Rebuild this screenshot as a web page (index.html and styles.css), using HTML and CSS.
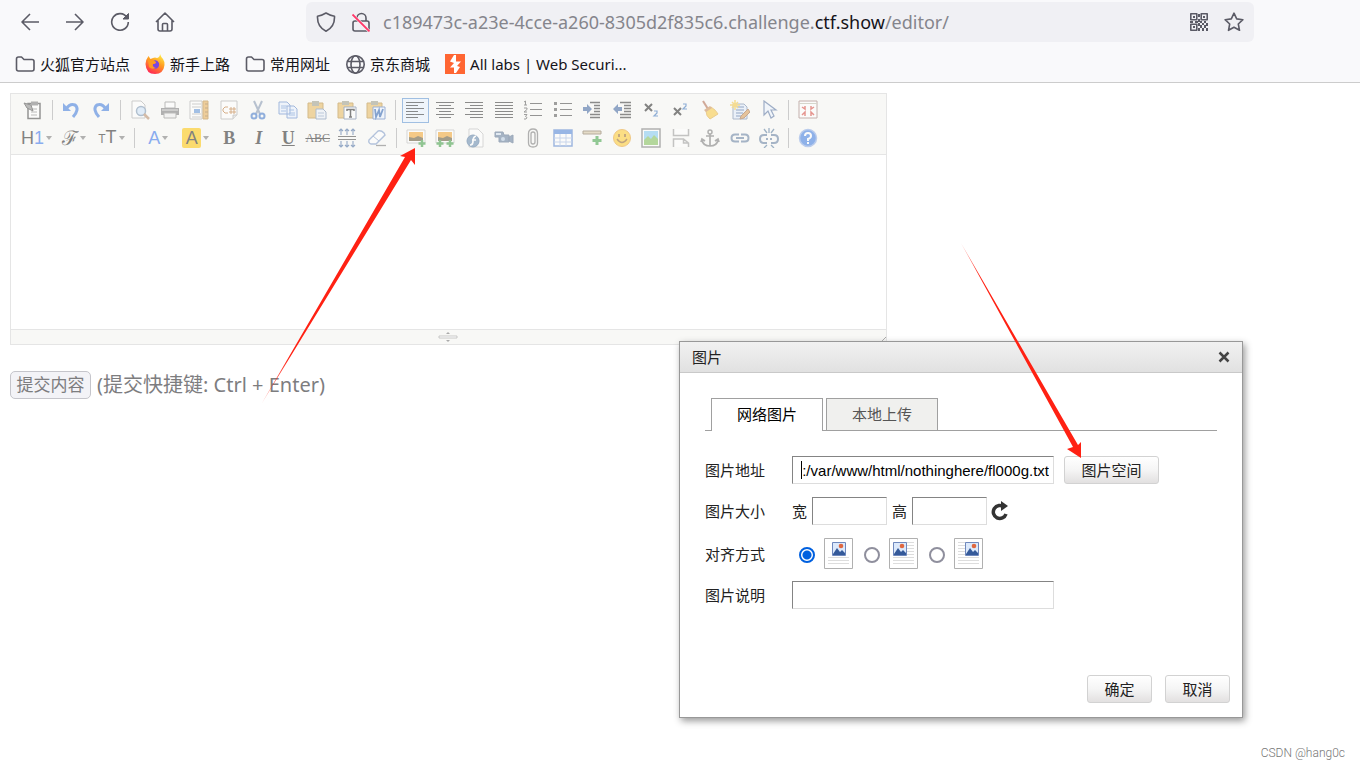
FILE: index.html
```html
<!DOCTYPE html>
<html lang="zh-CN">
<head>
<meta charset="utf-8">
<title>editor</title>
<link rel="stylesheet" href="styles.css">
</head>
<body>
<header class="browser">
  <div class="nav">
    <div class="nav-buttons">
      <button class="nav-btn" aria-label="Back"><svg viewBox="0 0 20 20"><path d="M19 10H2M10 2 2 10l8 8"/></svg></button>
      <button class="nav-btn" aria-label="Forward"><svg viewBox="0 0 20 20"><path d="M1 10h17M10 2l8 8-8 8"/></svg></button>
      <button class="nav-btn" aria-label="Reload"><svg viewBox="0 0 20 20"><path d="M17 5.500A8.300 8.300 0 1 0 18.300 10"/><path d="M18.500 1.500V7H13z" fill="#5b5b66" stroke-width="1"/></svg></button>
      <button class="nav-btn" aria-label="Home"><svg viewBox="0 0 20 20"><path d="M1 10 10 1l9 9M3 8.500V17q0 2 2 2h10q2 0 2-2V8.500M7.500 19v-6.500q0-1 1-1h3q1 0 1 1V19"/></svg></button>
    </div>
    <div class="url-bar">
      <svg class="ui" viewBox="0 0 20 20"><path d="M10 1Q14 3.500 18.500 4.200 19 15 10 19.200 1 15 1.500 4.200 6 3.500 10 1z"/></svg>
      <svg class="ui lock" viewBox="0 0 20 20"><path d="M6 9V6a4.500 4.500 0 0 1 9 0v3M4 9h12q2 0 2 2v6q0 2-2 2H4q-2 0-2-2v-6q0-2 2-2z"/><path d="M1.500 2.500l17 17" stroke="#f9f9fb" stroke-width="3"/><path d="M1.500 2.500l17 17" stroke="#ff3b6b" stroke-width="1.800"/></svg>
      <div class="url">c189473c-a23e-4cce-a260-8305d2f835c6.challenge.<b>ctf.show</b>/editor/</div>
      <svg class="ui" viewBox="0 0 20 20"><path d="M1.800 1.800h6v6h-6zM12.200 1.800h6v6h-6zM1.800 12.200h6v6h-6z" stroke-width="1.600"/><path fill="#5b5b66" stroke="none" d="M4 4h2v2H4zM14 4h2v2h-2zM4 14h2v2H4zM9 2h2v3H9zM9 7h2v3H9zM1 9h3v2H1zM6 9h3v2H6zM11 9h2v2h-2zM15 9h2v2h-2zM9 11h2v3H9zM13 11h2v2h-2zM17 11h2v3h-2zM11 13h2v3h-2zM15 13h2v3h-2zM9 16h2v3H9zM13 16h2v3h-2zM17 16h2v3h-2z"/></svg>
      <svg class="ui" viewBox="0 0 20 20"><path d="M10 1.200l2.700 5.700 6.200.8-4.600 4.300 1.200 6.300L10 15.300l-5.500 3 1.200-6.300L1.100 7.700l6.200-.8z" stroke-linejoin="round"/></svg>
    </div>
  </div>
  <nav class="bookmarks">
    <a href="#"><svg class="ui" viewBox="0 0 20 20"><path d="M1.500 15V5q0-2 2-2h3l2.500 2.500h8q2 0 2 2V15q0 2-2 2h-13.500q-2 0-2-2z"/></svg>火狐官方站点</a>
    <a href="#"><svg viewBox="0 0 20 20"><defs><linearGradient id="fx" x1=".8" y1="0" x2=".3" y2="1"><stop offset="0" stop-color="#fff04a"/><stop offset=".45" stop-color="#ff9b20"/><stop offset="1" stop-color="#ff2456"/></linearGradient></defs><path fill="url(#fx)" d="M.500 10Q1 5 3.500 2l2 3 2.500-1q2-1 4 0 3-1 3-4 1 3 3 5 2 3 1.500 6Q18.500 20 10 20 1 20 .500 10z"/><path fill="#7a45e0" d="M8 7q4-2 6 2 1 5-4 6-4-1-4-4z"/><path fill="#ff9a22" d="M3 6q3-2 5 0l3 2q0 2-3 2-1 3 3 4-4 2-7-1z"/></svg>新手上路</a>
    <a href="#"><svg class="ui" viewBox="0 0 20 20"><path d="M1.500 15V5q0-2 2-2h3l2.500 2.500h8q2 0 2 2V15q0 2-2 2h-13.500q-2 0-2-2z"/></svg>常用网址</a>
    <a href="#"><svg class="ui" viewBox="0 0 20 20"><circle cx="10.500" cy="10.500" r="8.700"/><ellipse cx="10.500" cy="10.500" rx="4.500" ry="8.700"/><path d="M2.500 7.500h16M2.500 13.500h16"/></svg>京东商城</a>
    <a href="#"><svg viewBox="0 0 20 20"><path fill="#ff6633" d="M0 0h20v20H0z"/><path fill="#fff" d="M9 1h2v6.500h5L12 12l3 1-4 6H9v-5.500H5L9 9 5 7.500z"/></svg>All labs | Web Securi...</a>
  </nav>
</header>

<main class="page">
  <section class="editor">
    <div class="toolbar">
      <div class="tool-row">
        <button class="tool" aria-label="Source"><svg viewBox="0 0 20 20"><path d="M5 3.500h12v15H5z" fill="#fff" stroke="#444" stroke-width="1.500"/><path d="M8 1.500h7v4H8z" fill="#777"/><path d="M8 9h6M8 12h6M8 15h6" stroke="#888"/><path d="M1 3l7 2 2 6-6-3z" fill="#888" stroke="#444"/></svg></button>
        <i class="sep"></i>
        <button class="tool" aria-label="Undo"><svg viewBox="0 0 20 20"><path d="M4 9q4-6 9-4 5 4-2 12" fill="none" stroke="#3b78dc" stroke-width="3"/><path d="M1 3v8h8z" fill="#3b78dc"/></svg></button>
        <button class="tool" aria-label="Redo"><svg viewBox="0 0 20 20"><path d="M15 9Q11 3 6 5q-5 4 2 12" fill="none" stroke="#3b78dc" stroke-width="3"/><path d="M18 3v8h-8z" fill="#3b78dc"/></svg></button>
        <i class="sep"></i>
        <button class="tool" aria-label="Preview"><svg viewBox="0 0 20 20"><path d="M2 1h9l4 4v13H2z" fill="#fff" stroke="#aaa"/><circle cx="11" cy="11" r="4.500" fill="#cee3fa" stroke="#7893b0" stroke-width="1.500"/><path d="M14 14l5 5" stroke="#b78b67" stroke-width="2.500"/></svg></button>
        <button class="tool" aria-label="Print"><svg viewBox="0 0 20 20"><path d="M5 2h10v6H5z" fill="#fff" stroke="#888"/><path d="M1 8h18v7H1z" fill="#777"/><path d="M2 10h16" stroke="#ddd"/><path d="M4 13h12v5H4z" fill="#eee" stroke="#888"/></svg></button>
        <button class="tool" aria-label="Template"><svg viewBox="0 0 20 20"><path d="M1 1h12v18H1z" fill="#fff" stroke="#aaa"/><path d="M3 4h9M3 7h9M3 14h9M3 17h9" stroke="#aaa"/><path d="M5 9h6v4H5z" fill="#5d91d6"/><path d="M14 1h5v18h-5z" fill="#e7aa50" stroke="#b98538"/><path d="M16 4h3M16 8h3M16 12h3M16 16h3" stroke="#9b7238"/></svg></button>
        <button class="tool" aria-label="Code"><svg viewBox="0 0 20 20"><path d="M2 1h16v14l-4 4H2z" fill="#fff" stroke="#aaa"/><path d="M9 7H6L4 9v2l2 2h3M12 7v7M15 7v7M10 9h7M10 12h7" fill="none" stroke="#bb7430"/><path d="M14 19v-4h4" fill="#ddd" stroke="#aaa"/></svg></button>
        <button class="tool" aria-label="Cut"><svg viewBox="0 0 20 20"><path d="M6 1l6 13M14 1L8 14" stroke="#8295b0" stroke-width="2"/><circle cx="6" cy="16" r="2.500" fill="none" stroke="#3d75c8" stroke-width="2"/><circle cx="14" cy="16" r="2.500" fill="none" stroke="#3d75c8" stroke-width="2"/></svg></button>
        <button class="tool" aria-label="Copy"><svg viewBox="0 0 20 20"><path d="M1 2h8l3 3v9H1zM9 6h7l3 3v9H9z" fill="#e7f0ff" stroke="#5c85c8"/><path d="M3 6h6M3 8h5M3 11h5M11 10h5M11 13h6M11 15h6" stroke="#6f99d7"/></svg></button>
        <button class="tool" aria-label="Paste"><svg viewBox="0 0 20 20"><path d="M1 3h15v15H1z" fill="#e6b75b" stroke="#b78933"/><path d="M5 1h7v5H5z" fill="#9b9b86"/><path d="M9 9h7l3 3v7H9z" fill="#eaf0f7" stroke="#738bad"/><path d="M11 13h6M11 16h6" stroke="#8ca4c5"/></svg></button>
        <button class="tool" aria-label="Paste text"><svg viewBox="0 0 20 20"><path d="M1 3h15v15H1z" fill="#e6b75b" stroke="#b78933"/><path d="M5 1h7v4H5z" fill="#9b9b86"/><path d="M7 7h12v12H7z" fill="#fff" stroke="#65799a"/><path d="M10 11V9.500h7V11M13.500 9.500V17M12 17h3" fill="none" stroke="#222" stroke-width="1.500"/></svg></button>
        <button class="tool" aria-label="Paste Word"><svg viewBox="0 0 20 20"><path d="M1 3h15v15H1z" fill="#e6b75b" stroke="#b78933"/><path d="M5 1h7v4H5z" fill="#9b9b86"/><path d="M7 7h12v12H7z" fill="#eaf2ff" stroke="#5279bb"/><path d="M9 9l1 8 3-7 1 7 3-8" fill="none" stroke="#285fb1" stroke-width="1.800"/></svg></button>
        <i class="sep"></i>
        <button class="tool selected" aria-label="Align left"><svg viewBox="0 0 20 20"><path d="M1 2.500h18M1 5.500h12M1 8.500h18M1 11.500h12M1 14.500h18M1 17.500h12" stroke="#333"/></svg></button>
        <button class="tool" aria-label="Align center"><svg viewBox="0 0 20 20"><path d="M1 2.500h18M4 5.500h12M1 8.500h18M4 11.500h12M1 14.500h18M4 17.500h12" stroke="#333"/></svg></button>
        <button class="tool" aria-label="Align right"><svg viewBox="0 0 20 20"><path d="M1 2.500h18M6 5.500h13M1 8.500h18M6 11.500h13M1 14.500h18M6 17.500h13" stroke="#333"/></svg></button>
        <button class="tool" aria-label="Justify"><svg viewBox="0 0 20 20"><path d="M1 2.500h18M1 5.500h18M1 8.500h18M1 11.500h18M1 14.500h18M1 17.500h18" stroke="#333"/></svg></button>
        <button class="tool" aria-label="Numbered list"><svg viewBox="0 0 20 20"><path d="M7 3.500h12M7 9.500h12M7 15.500h12" stroke="#444"/><path d="M1 2l1.500-1v4M1 5h3M1 8h3v1.500L1 12h3M1 14.500h3l-1.500 2 1.500 1-1 1.500H1" fill="none" stroke="#555"/></svg></button>
        <button class="tool" aria-label="Bulleted list"><svg viewBox="0 0 20 20"><path d="M7 3.500h12M7 9.500h12M7 15.500h12" stroke="#444"/><path d="M1 2h3v3H1zM1 8h3v3H1zM1 14h3v3H1z" fill="#555"/></svg></button>
        <button class="tool" aria-label="Indent"><svg viewBox="0 0 20 20"><path d="M8 2.500h10M12 5.500h6M12 8.500h6M12 11.500h6M8 14.500h10M8 17.500h10" stroke="#333" stroke-width="1.400"/><path d="M1 7h4V4l5 5-5 5v-3H1z" fill="#3d649f"/></svg></button>
        <button class="tool" aria-label="Outdent"><svg viewBox="0 0 20 20"><path d="M8 2.500h11M12 5.500h7M12 8.500h7M12 11.500h7M8 14.500h11M8 17.500h11" stroke="#333" stroke-width="1.400"/><path d="M10 7H6V4L1 9l5 5v-3h4z" fill="#3d649f"/></svg></button>
        <button class="tool" aria-label="Subscript"><svg viewBox="0 0 20 20"><path d="M4 4l7 7M11 4l-7 7" stroke="#222" stroke-width="2"/><path d="M13 11h3v2l-3 3h4" fill="none" stroke="#3972bb" stroke-width="1.200"/></svg></button>
        <button class="tool" aria-label="Superscript"><svg viewBox="0 0 20 20"><path d="M3 8l7 7M10 8l-7 7" stroke="#222" stroke-width="2"/><path d="M12 4h3v2l-3 3h4" fill="none" stroke="#3972bb" stroke-width="1.200"/></svg></button>
        <button class="tool" aria-label="Clean"><svg viewBox="0 0 20 20"><path d="M3 1l5 8" stroke="#b16a4c" stroke-width="2"/><path d="M6 11l5-4q5 3 7 7l-8 5q-4-3-4-8z" fill="#f8c83c" stroke="#e0aa3a"/><path d="M4 10l6-4 2 2-6 4z" fill="#c98a50"/></svg></button>
        <button class="tool" aria-label="Quick format"><svg viewBox="0 0 20 20"><path d="M3 4h11l3 3v12H3z" fill="#dfeafb" stroke="#7186a8"/><path d="M7 7h7M6 10h8M6 13h7M6 16h5" stroke="#40649c"/><path d="M5 0v10M0 5h10M2 2l6 6M8 2L2 8" stroke="#f4c63d" stroke-width="1.500"/><path d="M11 16l7-7 2 3-6 6-4 1z" fill="#d79852" stroke="#9e683e"/></svg></button>
        <button class="tool" aria-label="Select all"><svg viewBox="0 0 20 20"><path d="M5 1v14l4-4 3 7 3-2-3-6h5z" fill="#edf4ff" stroke="#55719f" stroke-width="1.200"/></svg></button>
        <i class="sep"></i>
        <button class="tool" aria-label="Fullscreen"><svg viewBox="0 0 20 20"><path d="M1 1h18v17H1z" fill="#fff" stroke="#9a7773"/><path d="M1 3.500h18" stroke="#bba"/><path d="M4 7l3 2V6M16 7l-3 2V6M4 15l3-3v4M16 15l-3-3v4" fill="none" stroke="#d7453c" stroke-width="1.500"/></svg></button>
      </div>
      <div class="tool-row">
        <button class="tool wide" aria-label="Heading"><span>H<em>1</em></span><i class="drop"></i></button>
        <button class="tool wide" aria-label="Font"><span class="script">ℱ</span><i class="drop"></i></button>
        <button class="tool wide" aria-label="Size"><span><small>T</small>T</span><i class="drop"></i></button>
        <i class="sep"></i>
        <button class="tool wide" aria-label="Text color"><span><em>A</em></span><i class="drop"></i></button>
        <button class="tool wide" aria-label="Highlight"><span class="mark">A</span><i class="drop"></i></button>
        <button class="tool serif" aria-label="Bold"><b>B</b></button>
        <button class="tool serif italic" aria-label="Italic"><b>I</b></button>
        <button class="tool serif under" aria-label="Underline"><b>U</b></button>
        <button class="tool serif strike" aria-label="Strikethrough"><span>ABC</span></button>
        <button class="tool" aria-label="Line height"><svg viewBox="0 0 20 20"><path d="M1 8.500h18M1 11.500h18" stroke="#444"/><path d="M4 7V1M10 7V1M16 7V1M4 13v6M10 13v6M16 13v6M2 3l2-2 2 2M8 3l2-2 2 2M14 3l2-2 2 2M2 17l2 2 2-2M8 17l2 2 2-2M14 17l2 2 2-2" fill="none" stroke="#456aa0" stroke-width="1.100"/></svg></button>
        <button class="tool" aria-label="Remove format"><svg viewBox="0 0 20 20"><path d="M2 12l9-9q3-1 6 2l1 2-9 9H4q-3-1-2-4z" fill="#fff" stroke="#7c98c7" stroke-width="1.400"/><path d="M6 8l6 5" stroke="#7c98c7"/><path d="M9 17.500h10" stroke="#777" stroke-width="1.300"/></svg></button>
        <i class="sep"></i>
        <button class="tool" aria-label="Image"><svg viewBox="0 0 20 20"><path d="M1 2h18v13H1z" fill="#fff" stroke="#bbb"/><path d="M3 4h14v9H3z" fill="#f2a32d"/><path d="M3 9l5 1 4-2 5 2v3H3z" fill="#5f5131"/><path d="M16 12v7M12.500 15.500h7" stroke="#3c9c42" stroke-width="2.500"/></svg></button>
        <button class="tool" aria-label="Multi image"><svg viewBox="0 0 20 20"><path d="M1 2h18v13H1z" fill="#fff" stroke="#bbb"/><path d="M3 4h14v9H3z" fill="#f2a32d"/><path d="M3 9l5 1 4-2 5 2v3H3z" fill="#5f5131"/><path d="M5 12v7M1.500 15.500h7M15 12v7M11.500 15.500h7" stroke="#3c9c42" stroke-width="2.500"/></svg></button>
        <button class="tool" aria-label="Flash"><svg viewBox="0 0 20 20"><path d="M4 1h9l5 5v13H4z" fill="#fff" stroke="#bbb"/><circle cx="8" cy="13" r="6" fill="#6286ad" stroke="#496f99"/><path d="M11 8Q8 9 8 13t-3 4M7 12h4" fill="none" stroke="#fff" stroke-width="1.700"/></svg></button>
        <button class="tool" aria-label="Media"><svg viewBox="0 0 20 20"><path d="M1 4h8l1 3h5v7H5V9H1zM15 9l4-2v8l-4-2z" fill="#627c9c" stroke="#536b89"/><path d="M2 5h5v2H2z" fill="#cfdeed"/><circle cx="9" cy="11" r="2" fill="#b4c9e1"/></svg></button>
        <button class="tool" aria-label="Attachment"><svg viewBox="0 0 20 20"><path d="M5.500 13V5.500q0-4.500 4.500-4.500t4.500 4.500V15q0 4-4.500 4t-4.500-4V8M8 14V6q0-2 2-2t2 2v8q0 2-2 2t-2-2" fill="none" stroke="#777" stroke-width="1.300"/></svg></button>
        <button class="tool" aria-label="Table"><svg viewBox="0 0 20 20"><path d="M1 2h18v16H1z" fill="#fff" stroke="#5783ce" stroke-width="1.500"/><path d="M1 2h18v4H1z" fill="#4a81d8"/><path d="M1 10h18M1 14h18M7 6v12M13 6v12" stroke="#a2b9e2"/></svg></button>
        <button class="tool" aria-label="Line"><svg viewBox="0 0 20 20"><path d="M1 3h18v3H1z" fill="#d6c6a3" stroke="#806f55"/><path d="M15 8v9M10.500 12.500h9" stroke="#3da145" stroke-width="3"/></svg></button>
        <button class="tool" aria-label="Emoticon"><svg viewBox="0 0 20 20"><circle cx="10" cy="10" r="8.500" fill="#ffc928" stroke="#e8a12c"/><path d="M5 11q5 7 10 0" fill="none" stroke="#905e20" stroke-width="1.300"/><path d="M7 6v3M13 6v3" stroke="#905e20" stroke-width="1.800"/></svg></button>
        <button class="tool" aria-label="Map"><svg viewBox="0 0 20 20"><path d="M1 1h18v18H1z" fill="#fff" stroke="#777" stroke-width="1.500"/><path d="M3 3h14v14H3z" fill="#80c8f1"/><path d="M3 12l4-4 3 3 3-4 4 4v6H3z" fill="#7dbd54"/></svg></button>
        <button class="tool" aria-label="Page break"><svg viewBox="0 0 20 20"><path d="M2.500 1v6.500h15V1M2.500 19v-8h10l5 4v4M12.500 11v4h5" fill="#fff" stroke="#999" stroke-width="1.500"/></svg></button>
        <button class="tool" aria-label="Anchor"><svg viewBox="0 0 20 20"><circle cx="10" cy="4" r="2" fill="none" stroke="#777" stroke-width="1.500"/><path d="M10 6v12M6 8h8M2 12q1 6 8 6t8-6M1 14l1-3 3 2M19 14l-1-3-3 2" fill="none" stroke="#777" stroke-width="1.700"/></svg></button>
        <button class="tool" aria-label="Link"><svg viewBox="0 0 20 20"><path d="M9 6.500H5Q1.500 6.500 1.500 10T5 13.500h4M11 6.500h4q3.500 0 3.500 3.500T15 13.500h-4M6 10h8" fill="none" stroke="#637d9f" stroke-width="2"/></svg></button>
        <button class="tool" aria-label="Unlink"><svg viewBox="0 0 20 20"><path d="M8 7H5Q1 7 1 11t4 4h3M12 7h3q4 0 4 4t-4 4h-3M7 11h2M11 11h2" fill="none" stroke="#637d9f" stroke-width="2"/><path d="M5 1l3 4M10 0v5M15 1l-3 4M5 20l3-3M15 20l-3-3" stroke="#56799d" stroke-width="1.300"/></svg></button>
        <i class="sep"></i>
        <button class="tool" aria-label="About"><svg viewBox="0 0 20 20"><circle cx="10" cy="10" r="8.500" fill="#3978df" stroke="#89a9e5" stroke-width="1.500"/><path d="M7 8q0-3 3-3t3 3q0 2-3 3v2M10 14v2" fill="none" stroke="#fff" stroke-width="2"/></svg></button>
      </div>
    </div>
    <div class="edit-area"></div>
    <div class="status">
      <svg class="grip" viewBox="0 0 20 12"><path d="M1 5h18v2H1z" fill="#fff" stroke="#bbb" stroke-width=".800"/><path d="M8 3l2-2 2 2M8 9l2 2 2-2" fill="#aaa"/></svg>
      <svg class="corner" viewBox="0 0 8 8"><path d="M1 8l7-7M5 8l3-3" stroke="#aaa"/></svg>
    </div>
  </section>
  <div class="submit-line"><button class="submit">提交内容</button><span>(提交快捷键: Ctrl + Enter)</span></div>
</main>

<section class="dialog" role="dialog" aria-labelledby="dialog-title">
  <div class="dialog-head"><span id="dialog-title">图片</span><button class="close" aria-label="关闭"><svg viewBox="0 0 12 12"><path d="M1.500 1.500l9 9M10.500 1.500l-9 9" stroke="#444" stroke-width="2.500"/></svg></button></div>
  <div class="dialog-body">
    <div class="tabs"><button class="tab active">网络图片</button><button class="tab">本地上传</button></div>
    <div class="field"><label for="remote">图片地址</label><span class="caret-box"><input class="long address" id="remote" value=":/var/www/html/nothinghere/fl000g.txt"><i class="caret"></i></span><button class="btn space">图片空间</button></div>
    <div class="field"><span class="name">图片大小</span><label class="mini" for="w">宽</label><input class="short" id="w"><label class="mini" for="h">高</label><input class="short" id="h"><button class="refresh" aria-label="重置大小"><svg viewBox="0 0 20 20"><path d="M14 6a6.500 6.500 0 1 0 2 7" fill="none" stroke="#333" stroke-width="3.500"/><path d="M11 0l7 5-7 5z" fill="#333"/></svg></button></div>
    <div class="field align"><span class="name">对齐方式</span>
      <input type="radio" name="align" id="al1" checked><label for="al1" aria-label="默认"><svg viewBox="0 0 29 31"><path d="M.500 .500h28v30H.500z" fill="#fff" stroke="#b0b0b0"/><path d="M4 19.500h21M4 22.500h21M4 25.500h21" stroke="#ddd"/><use href="#pic" x="8"/></svg></label>
      <input type="radio" name="align" id="al2"><label for="al2" aria-label="左对齐"><svg viewBox="0 0 29 31"><path d="M.500 .500h28v30H.500z" fill="#fff" stroke="#b0b0b0"/><path d="M4 4.500h21M4 7.500h21M4 10.500h21M4 13.500h21M4 16.500h21M4 19.500h21M4 22.500h21M4 25.500h21" stroke="#ddd"/><use href="#pic" x="4"/></svg></label>
      <input type="radio" name="align" id="al3"><label for="al3" aria-label="右对齐"><svg viewBox="0 0 29 31"><path d="M.500 .500h28v30H.500z" fill="#fff" stroke="#b0b0b0"/><path d="M4 4.500h21M4 7.500h21M4 10.500h21M4 13.500h21M4 16.500h21M4 19.500h21M4 22.500h21M4 25.500h21" stroke="#ddd"/><use href="#pic" x="11"/></svg></label>
    </div>
    <div class="field"><label for="desc">图片说明</label><input class="long" id="desc"></div>
  </div>
  <div class="dialog-foot"><button class="btn">确定</button><button class="btn">取消</button></div>
</section>

<svg class="arrows" viewBox="0 0 1360 769">
  <defs>
    <linearGradient id="a1" gradientUnits="userSpaceOnUse" x1="262" y1="403" x2="290" y2="356"><stop offset="0" stop-color="#ff2113" stop-opacity=".5"/><stop offset="1" stop-color="#ff2113"/></linearGradient>
    <linearGradient id="a2" gradientUnits="userSpaceOnUse" x1="961" y1="243" x2="980" y2="277"><stop offset="0" stop-color="#ff2113" stop-opacity=".5"/><stop offset="1" stop-color="#ff2113"/></linearGradient>
    <g id="pic"><path d="M.500 4.500h13v13H.500z" fill="#dce9fb" stroke="#6f88bd"/><path d="M1 16l4-6 3 4 2-2 3 3v2H1z" fill="#355a9a"/><circle cx="9" cy="8" r="2.300" fill="#df6841"/></g>
  </defs>
  <path fill="url(#a1)" d="M262 403l143-246-5-1 15-8v17l-4-5z"/>
  <path fill="url(#a2)" d="M961 243l117 202 3-3v16l-14-9 6-2z"/>
</svg>
<footer class="credit">CSDN @hang0c</footer>
</body>
</html>
```
FILE: styles.css
```css
* { box-sizing: border-box; }
body {
  margin: 0;
  min-height: 100vh;
  position: relative;
  background: #fff;
  color: #15141a;
  font: 15px/20px "Noto Sans", "Noto Sans CJK SC", sans-serif;
}
button, input { font: inherit; margin: 0; }
button { padding: 0; border: 0; background: none; color: inherit; }
svg { display: block; width: 20px; height: 20px; flex: none; }

.browser { height: 83px; padding-top: 2px; background: #f9f9fb; border-bottom: 1px solid #ccc; }
.nav { display: flex; height: 40px; padding: 0 106px 0 7px; }
.nav-buttons { display: flex; width: 299px; }
.nav-btn { display: grid; place-items: center; width: 45px; }
.nav-btn svg, .ui { fill: none; stroke: #5b5b66; stroke-width: 1.6; stroke-linejoin: round; }
.url-bar { display: flex; flex: 1; align-items: center; gap: 15px; padding: 0 10px; border-radius: 6px; background: #f0f0f4; }
.lock { margin-right: -3px; }
.url { flex: 1; font-size: 18px; color: #85858c; white-space: nowrap; }
.url b { font-weight: 400; color: #15141a; }
.bookmarks { display: flex; gap: 15px; padding: 12px 15px; }
.bookmarks a { display: flex; gap: 5px; color: inherit; text-decoration: none; white-space: nowrap; }

.page { padding: 10px; }
.editor { max-width: 877px; border: 1px solid #e5e5e5; }
.toolbar { height: 61px; padding: 3px 8px; background: #f8f8f6; border-bottom: 1px solid #e5e5e5; }
.tool-row { display: flex; justify-content: space-between; align-items: center; max-width: 803px; height: 26px; margin-bottom: 2px; }
.tool { display: flex; align-items: center; justify-content: center; width: 27px; height: 25px; color: #222; }
.tool > * { opacity: .55; }
.selected { border: 1px solid #a0bfe2; background: #eff5fb; }
.sep { width: 1px; height: 20px; margin: 0 3px; background: #ccc; }
.wide { width: 35px; gap: 2px; font: 18px/20px "Liberation Sans", sans-serif; }
.wide em { font-style: normal; color: #2f6fea; }
.wide small { font-size: 12px; }
.script { font: 20px/20px "DejaVu Serif", serif; }
.mark { width: 19px; border-radius: 2px; background: #ffc400; }
.drop { border: 3px solid transparent; border-top: 4px solid #777; border-bottom: 0; }
.serif { font: 18px/20px "Liberation Serif", serif; }
.italic { font-style: italic; }
.under { text-decoration: underline; }
.strike { font-size: 12px; text-decoration: line-through; }
.edit-area { height: 174px; }
.status { display: flex; align-items: center; height: 15px; padding-left: 427px; background: #f8f8f6; border-top: 1px solid #e5e5e5; }
.grip { height: 12px; }
.corner { width: 8px; height: 8px; margin: 6px 0 0 auto; }
.submit-line { display: flex; align-items: center; gap: 6px; margin-top: 26px; font-size: 20px; line-height: 28px; color: #7d7d7f; }
.submit { width: 81px; height: 28px; border: 1px solid #c5c5cb; border-radius: 5px; background: #f3f3f7; font-size: 17px; line-height: 24px; }

.dialog { position: absolute; left: 679px; top: 341px; width: 564px; border: 1px solid #989898; background: #fff; color: #222; box-shadow: 2px 3px 7px #999; }
.dialog-head { display: flex; align-items: center; justify-content: space-between; height: 31px; padding: 0 12px; border-bottom: 1px solid #c9c9c9; background: linear-gradient(#f1f1f1, #e1e1e1); }
.close svg { width: 12px; height: 12px; }
.dialog-body { padding: 25px; }
.tabs { display: flex; gap: 3px; height: 33px; margin-bottom: 25px; padding-left: 6px; border-bottom: 1px solid #a0a0a0; }
.tab { width: 112px; height: 32px; padding-bottom: 1px; border: 1px solid #a0a0a0; border-bottom: 0; background: #f0f0ee; color: #555; }
.tab.active { height: 33px; padding-bottom: 2px; background: #fff; color: #000; }
.field { display: flex; align-items: center; height: 28px; margin-bottom: 13px; }
.field > :first-child { width: 87px; }
.dialog input:not([type="radio"]) { height: 28px; padding: 0 4px; border: 1px solid #848484; border-right-color: #ddd; border-bottom-color: #ddd; border-radius: 0; background: #fff; color: #000; }
.long { width: 262px; }
.address { font-family: "Liberation Sans", sans-serif; text-align: right; }
.caret-box { position: relative; display: flex; }
.caret { position: absolute; left: 9px; top: 5px; width: 1px; height: 18px; background: #000; }
.btn { min-width: 65px; height: 28px; border: 1px solid #d2d2d2; border-radius: 3px; background: linear-gradient(#fff, #f5f5f5 50%, #e2e0e0); color: #222; }
.space { width: 95px; margin-left: 10px; }
.mini { width: 20px; }
.short { width: 75px; }
.short + .mini { margin-left: 5px; }
.refresh { margin-left: 3px; }
.align { height: 31px; margin-bottom: 12px; }
.align input { appearance: none; width: 16px; height: 16px; margin: 3px 9px 0 11px; border: 2px solid #8f8f9d; border-radius: 50%; background: #fff; }
.align .name + input { margin-left: 7px; }
.align input:checked { border-color: #0060df; background: radial-gradient(circle, #0060df 4px, #fff 5px); }
.align label svg { width: 29px; height: 31px; }
.dialog-foot { display: flex; justify-content: flex-end; gap: 13px; padding: 28px 12px 14px; }
.arrows { position: absolute; left: 0; top: 0; width: 1360px; height: 769px; pointer-events: none; }
.credit { position: absolute; right: 15px; bottom: 8px; font: 300 12px/16px Roboto, sans-serif; color: #777; }
```
